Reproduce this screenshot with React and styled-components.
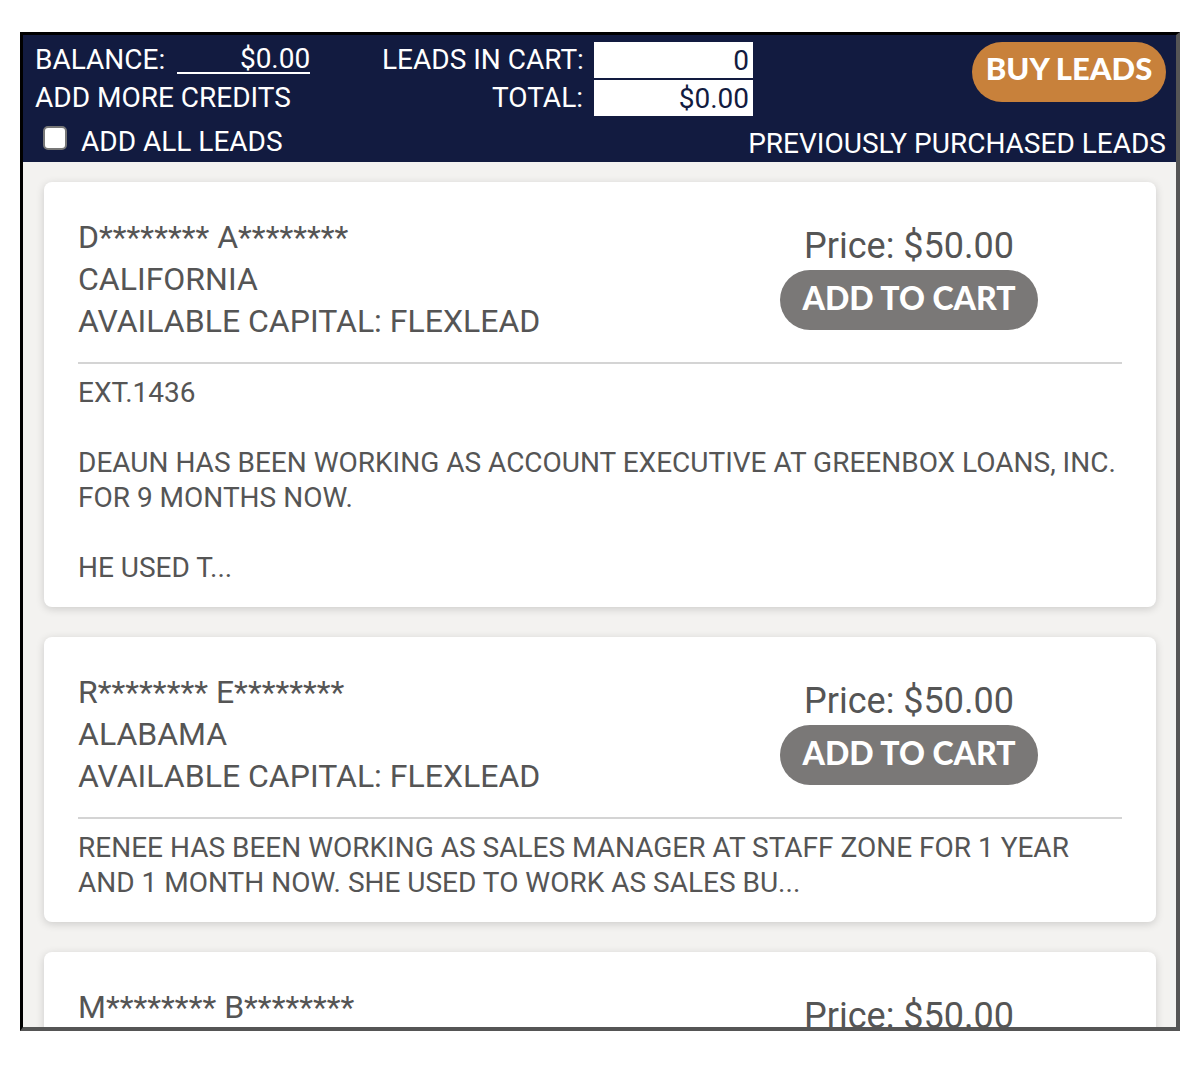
import React from "react";
import styled, { createGlobalStyle } from "styled-components";

const Global = createGlobalStyle`
  html, body { margin: 0; padding: 0; background: #ffffff; }
  body { font-family: Roboto, "Liberation Sans", sans-serif; }
  * { box-sizing: border-box; }
`;

const Frame = styled.div`
  margin: 32px 20px 0 20px;
  width: 1160px;
  height: 999px;
  border-style: solid;
  border-width: 3px 4px 4px 3px;
  border-color: #000 #555 #555 #000;
  display: flex;
  flex-direction: column;
  overflow: hidden;
  background: #f3f2f0;
`;

const Header = styled.header`
  flex-shrink: 0;
  background: #121b40;
  color: #fff;
  padding: 7px 10px 0 12px;
  height: 127px;
  display: flex;
  flex-direction: column;
  font-family: Roboto, "Liberation Sans", sans-serif;
  font-size: 28px;
`;

const TopRow = styled.div`
  display: flex;
  align-items: flex-start;
`;

const LeftBlock = styled.div`
  width: 347px;
  display: flex;
  flex-direction: column;
  gap: 2px;
`;

const Line = styled.div`
  height: 36px;
  line-height: 36px;
  white-space: nowrap;
  display: flex;
  align-items: center;
`;

const BalanceValue = styled.span`
  display: inline-block;
  width: 133px;
  margin-left: 12px;
  text-align: right;
  line-height: 26px;
  border-bottom: 2px solid #fff;
`;

const CartTable = styled.div`
  display: grid;
  grid-template-columns: 201px 159px;
  column-gap: 11px;
  row-gap: 2px;
`;

const CartLabel = styled.div`
  height: 36px;
  line-height: 36px;
  text-align: right;
  white-space: nowrap;
`;

const CartBox = styled.div`
  height: 36px;
  line-height: 38px;
  background: #fff;
  color: #121b40;
  text-align: right;
  padding-right: 4px;
`;

const BuyButton = styled.button`
  margin-left: auto;
  width: 194px;
  height: 60px;
  border: none;
  border-radius: 30px;
  background: #c8813b;
  color: #fff;
  font-family: Lato, "Liberation Sans", sans-serif;
  font-weight: 900;
  font-size: 31px;
  padding: 0 0 8px;
  cursor: pointer;
`;

const BottomRow = styled.div`
  margin-top: 7px;
  display: flex;
  align-items: center;
  justify-content: space-between;
  height: 36px;
`;

const CheckLabel = styled.label`
  display: flex;
  align-items: center;
  gap: 14px;
  margin-left: 8px;
  white-space: nowrap;
`;

const Check = styled.span`
  width: 24px;
  height: 24px;
  border-radius: 5px;
  background: #fff;
  border: 2px solid #777;
  margin-top: -6px;
`;

const PrevLink = styled.div`
  white-space: nowrap;
  margin-top: 4px;
`;

const List = styled.main`
  flex: 1;
  padding: 20px 20px 0 21px;
  display: flex;
  flex-direction: column;
  gap: 30px;
  color: #555;
`;

const Card = styled.section`
  background: #fff;
  border-radius: 8px;
  box-shadow: 0 2px 8px rgba(0, 0, 0, 0.16);
  padding: 34px 34px 22px 34px;
  flex-shrink: 0;
`;

const CardTop = styled.div`
  display: flex;
  justify-content: space-between;
  align-items: flex-start;
`;

const Info = styled.div`
  font-size: 32px;
  line-height: 42px;
`;

const PriceCol = styled.div`
  width: 258px;
  margin-right: 84px;
  display: flex;
  flex-direction: column;
  align-items: center;
`;

const Price = styled.div`
  font-size: 36px;
  line-height: 40px;
  margin-top: 10px;
  white-space: nowrap;
`;

const CartButton = styled.button`
  margin-top: 4px;
  width: 258px;
  height: 60px;
  border: none;
  border-radius: 30px;
  background: #7a7877;
  color: #fff;
  font-family: Lato, "Liberation Sans", sans-serif;
  font-weight: 900;
  font-size: 32px;
  padding: 0 0 6px;
  cursor: pointer;
`;

const Divider = styled.hr`
  margin: 20px 0 11px;
  border: none;
  border-top: 2px solid #d4d4d4;
`;

const Description = styled.div`
  font-size: 28px;
  line-height: 35px;
  white-space: pre-wrap;
`;

const leads = [
  {
    name: "D******** A********",
    state: "CALIFORNIA",
    capital: "FLEXLEAD",
    desc:
      "EXT.1436\n\nDEAUN HAS BEEN WORKING AS ACCOUNT EXECUTIVE AT GREENBOX LOANS, INC.\nFOR 9 MONTHS NOW.\n\nHE USED T...",
  },
  {
    name: "R******** E********",
    state: "ALABAMA",
    capital: "FLEXLEAD",
    desc:
      "RENEE HAS BEEN WORKING AS SALES MANAGER AT STAFF ZONE FOR 1 YEAR\nAND 1 MONTH NOW. SHE USED TO WORK AS SALES BU...",
  },
  {
    name: "M******** B********",
    state: "TEXAS",
    capital: "FLEXLEAD",
    desc: "",
  },
];

export default function App() {
  return (
    <>
      <Global />
      <Frame>
        <Header>
          <TopRow>
            <LeftBlock>
              <Line>
                BALANCE:
                <BalanceValue>$0.00</BalanceValue>
              </Line>
              <Line>ADD MORE CREDITS</Line>
            </LeftBlock>
            <CartTable>
              <CartLabel>LEADS IN CART:</CartLabel>
              <CartBox>0</CartBox>
              <CartLabel>TOTAL:</CartLabel>
              <CartBox>$0.00</CartBox>
            </CartTable>
            <BuyButton>BUY LEADS</BuyButton>
          </TopRow>
          <BottomRow>
            <CheckLabel>
              <Check />
              ADD ALL LEADS
            </CheckLabel>
            <PrevLink>PREVIOUSLY PURCHASED LEADS</PrevLink>
          </BottomRow>
        </Header>
        <List>
          {leads.map((l) => (
            <Card key={l.name}>
              <CardTop>
                <Info>
                  <div>{l.name}</div>
                  <div>{l.state}</div>
                  <div>AVAILABLE CAPITAL: {l.capital}</div>
                </Info>
                <PriceCol>
                  <Price>Price: $50.00</Price>
                  <CartButton>ADD TO CART</CartButton>
                </PriceCol>
              </CardTop>
              <Divider />
              <Description>{l.desc}</Description>
            </Card>
          ))}
        </List>
      </Frame>
    </>
  );
}
